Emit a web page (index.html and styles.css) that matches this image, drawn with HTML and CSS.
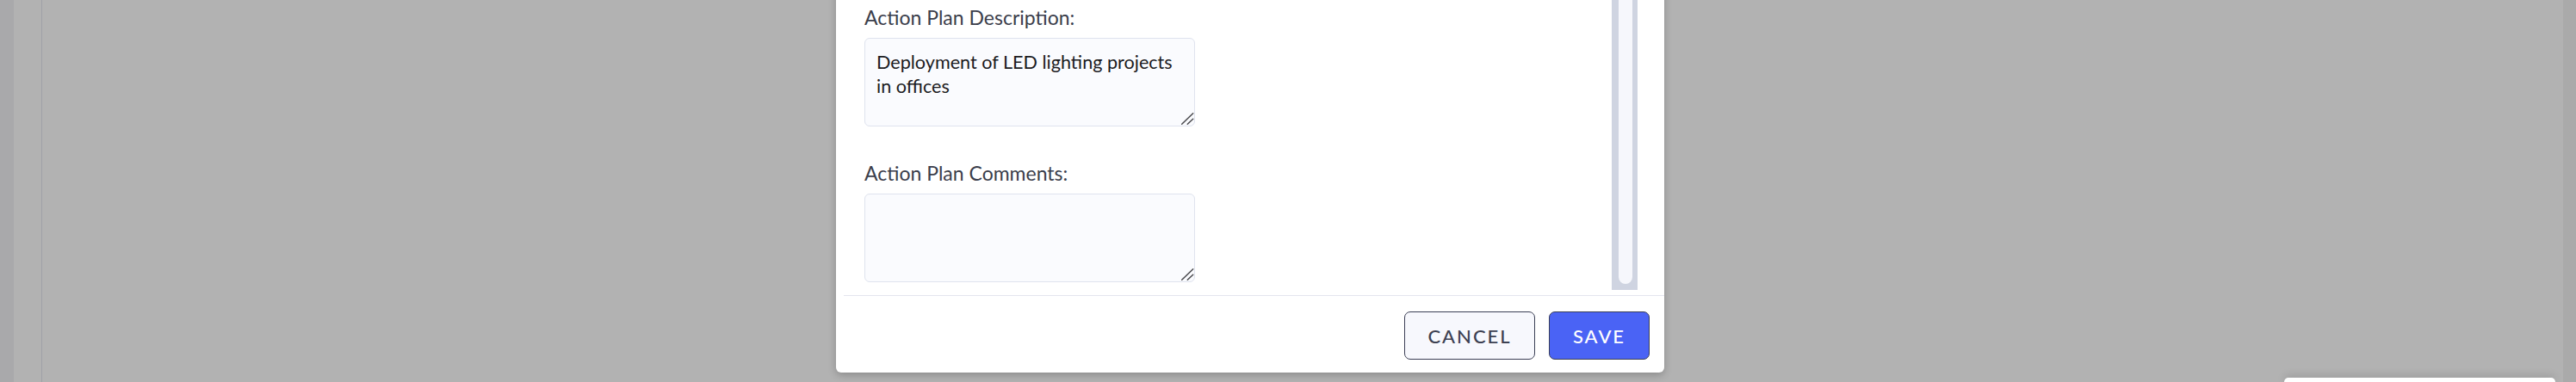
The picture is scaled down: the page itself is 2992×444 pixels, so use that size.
FILE: index.html
```html
<!DOCTYPE html>
<html lang="en">
<head>
<meta charset="utf-8">
<title>Action Plan</title>
<link rel="stylesheet" href="styles.css">
</head>
<body>
<div class="page">
  <div class="edge-left"></div>
  <div class="content"></div>
  <div class="edge-right"></div>
  <div class="toast"></div>
</div>

<div class="modal">
  <div class="modal-body">
    <div class="form">
      <label class="field-label" for="desc">Action Plan Description:</label>
      <div class="field">
        <textarea id="desc" class="field-input">Deployment of LED lighting projects in offices</textarea>
        <svg class="grip" width="16" height="16" viewBox="0 0 16 16" aria-hidden="true"><path d="M1.7 14.3 L14.7 1.7 M8.3 14.3 L14.7 8.3" stroke="#4a4a4e" stroke-width="1.5" stroke-linecap="round" fill="none"/></svg>
      </div>
      <label class="field-label second" for="comments">Action Plan Comments:</label>
      <div class="field">
        <textarea id="comments" class="field-input"></textarea>
        <svg class="grip" width="16" height="16" viewBox="0 0 16 16" aria-hidden="true"><path d="M1.7 14.3 L14.7 1.7 M8.3 14.3 L14.7 8.3" stroke="#4a4a4e" stroke-width="1.5" stroke-linecap="round" fill="none"/></svg>
      </div>
    </div>
    <div class="scrollbar"><div class="thumb"></div></div>
  </div>
  <div class="modal-footer">
    <button class="btn btn-cancel" type="button">CANCEL</button>
    <button class="btn btn-save" type="button">SAVE</button>
  </div>
</div>
</body>
</html>
```

FILE: styles.css
```css
html, body {
  margin: 0;
  padding: 0;
  width: 2992px;
  height: 444px;
  overflow: hidden;
  background: #b2b2b2;
}

.page {
  display: flex;
  height: 444px;
  position: relative;
}

.edge-left {
  width: 16px;
  background: #a9a9ab;
}

.content {
  flex: 1;
  margin-left: 32px;
  border-left: 1px solid #a0a1a8;
}

.edge-right {
  width: 15px;
  background: #aaaaaa;
}

.toast {
  position: absolute;
  left: 2653px;
  top: 439px;
  width: 315px;
  height: 5px;
  background: #ffffff;
  border-radius: 8px 8px 0 0;
  box-shadow: 0 -2px 10px rgba(0, 0, 0, 0.18);
}

.modal {
  position: absolute;
  left: 971px;
  top: -40px;
  width: 962px;
  height: 473px;
  display: flex;
  flex-direction: column;
  background: #ffffff;
  border-radius: 6px;
  box-shadow: 0 3px 10px rgba(0, 0, 0, 0.22);
  font-family: Lato, "Noto Sans", sans-serif;
}

.modal-body {
  height: 377px;
  display: flex;
  padding-right: 31px;
}

.form {
  flex: 1;
  display: flex;
  flex-direction: column;
  align-items: flex-start;
  padding: 44px 0 0 33px;
}

.field-label {
  font-size: 23px;
  line-height: 32px;
  color: #3b3e4b;
  margin-bottom: 8px;
}

.field-label.second {
  margin-top: 38px;
}

.field {
  position: relative;
  width: 384px;
  height: 103px;
}

.field-input {
  display: block;
  box-sizing: border-box;
  width: 384px;
  height: 103px;
  margin: 0;
  padding: 13px 14px 0 13px;
  border: 1px solid #dfe3ee;
  border-radius: 6px;
  background: #fafbfe;
  font-family: Lato, "Noto Sans", sans-serif;
  font-size: 21.6px;
  line-height: 28px;
  color: #1c1c1f;
  resize: none;
  outline: none;
}

.grip {
  position: absolute;
  right: 1px;
  bottom: 1px;
  pointer-events: none;
}

.scrollbar {
  width: 30px;
  box-sizing: border-box;
  background: #cfd4e1;
  padding: 0 6px 7px 8px;
}

.thumb {
  height: 100%;
  background: #f6f7fc;
  border-radius: 0 0 8px 8px;
}

.modal-footer {
  margin-top: 6px;
  margin-left: 9px;
  border-top: 1px solid #e4e5ee;
  padding: 18px 17px 15px 0;
  display: flex;
  justify-content: flex-end;
  gap: 16px;
}

.btn {
  height: 56px;
  box-sizing: border-box;
  border: 1px solid #3b3f55;
  border-radius: 7px;
  font-family: Lato, "Noto Sans", sans-serif;
  font-size: 22px;
  font-weight: 500;
  letter-spacing: 2px;
  padding: 0;
}

.btn-cancel {
  width: 152px;
  background: #f7f8fd;
  color: #3d4152;
}

.btn-save {
  width: 117px;
  background: #4a63f5;
  color: #ffffff;
}
```
